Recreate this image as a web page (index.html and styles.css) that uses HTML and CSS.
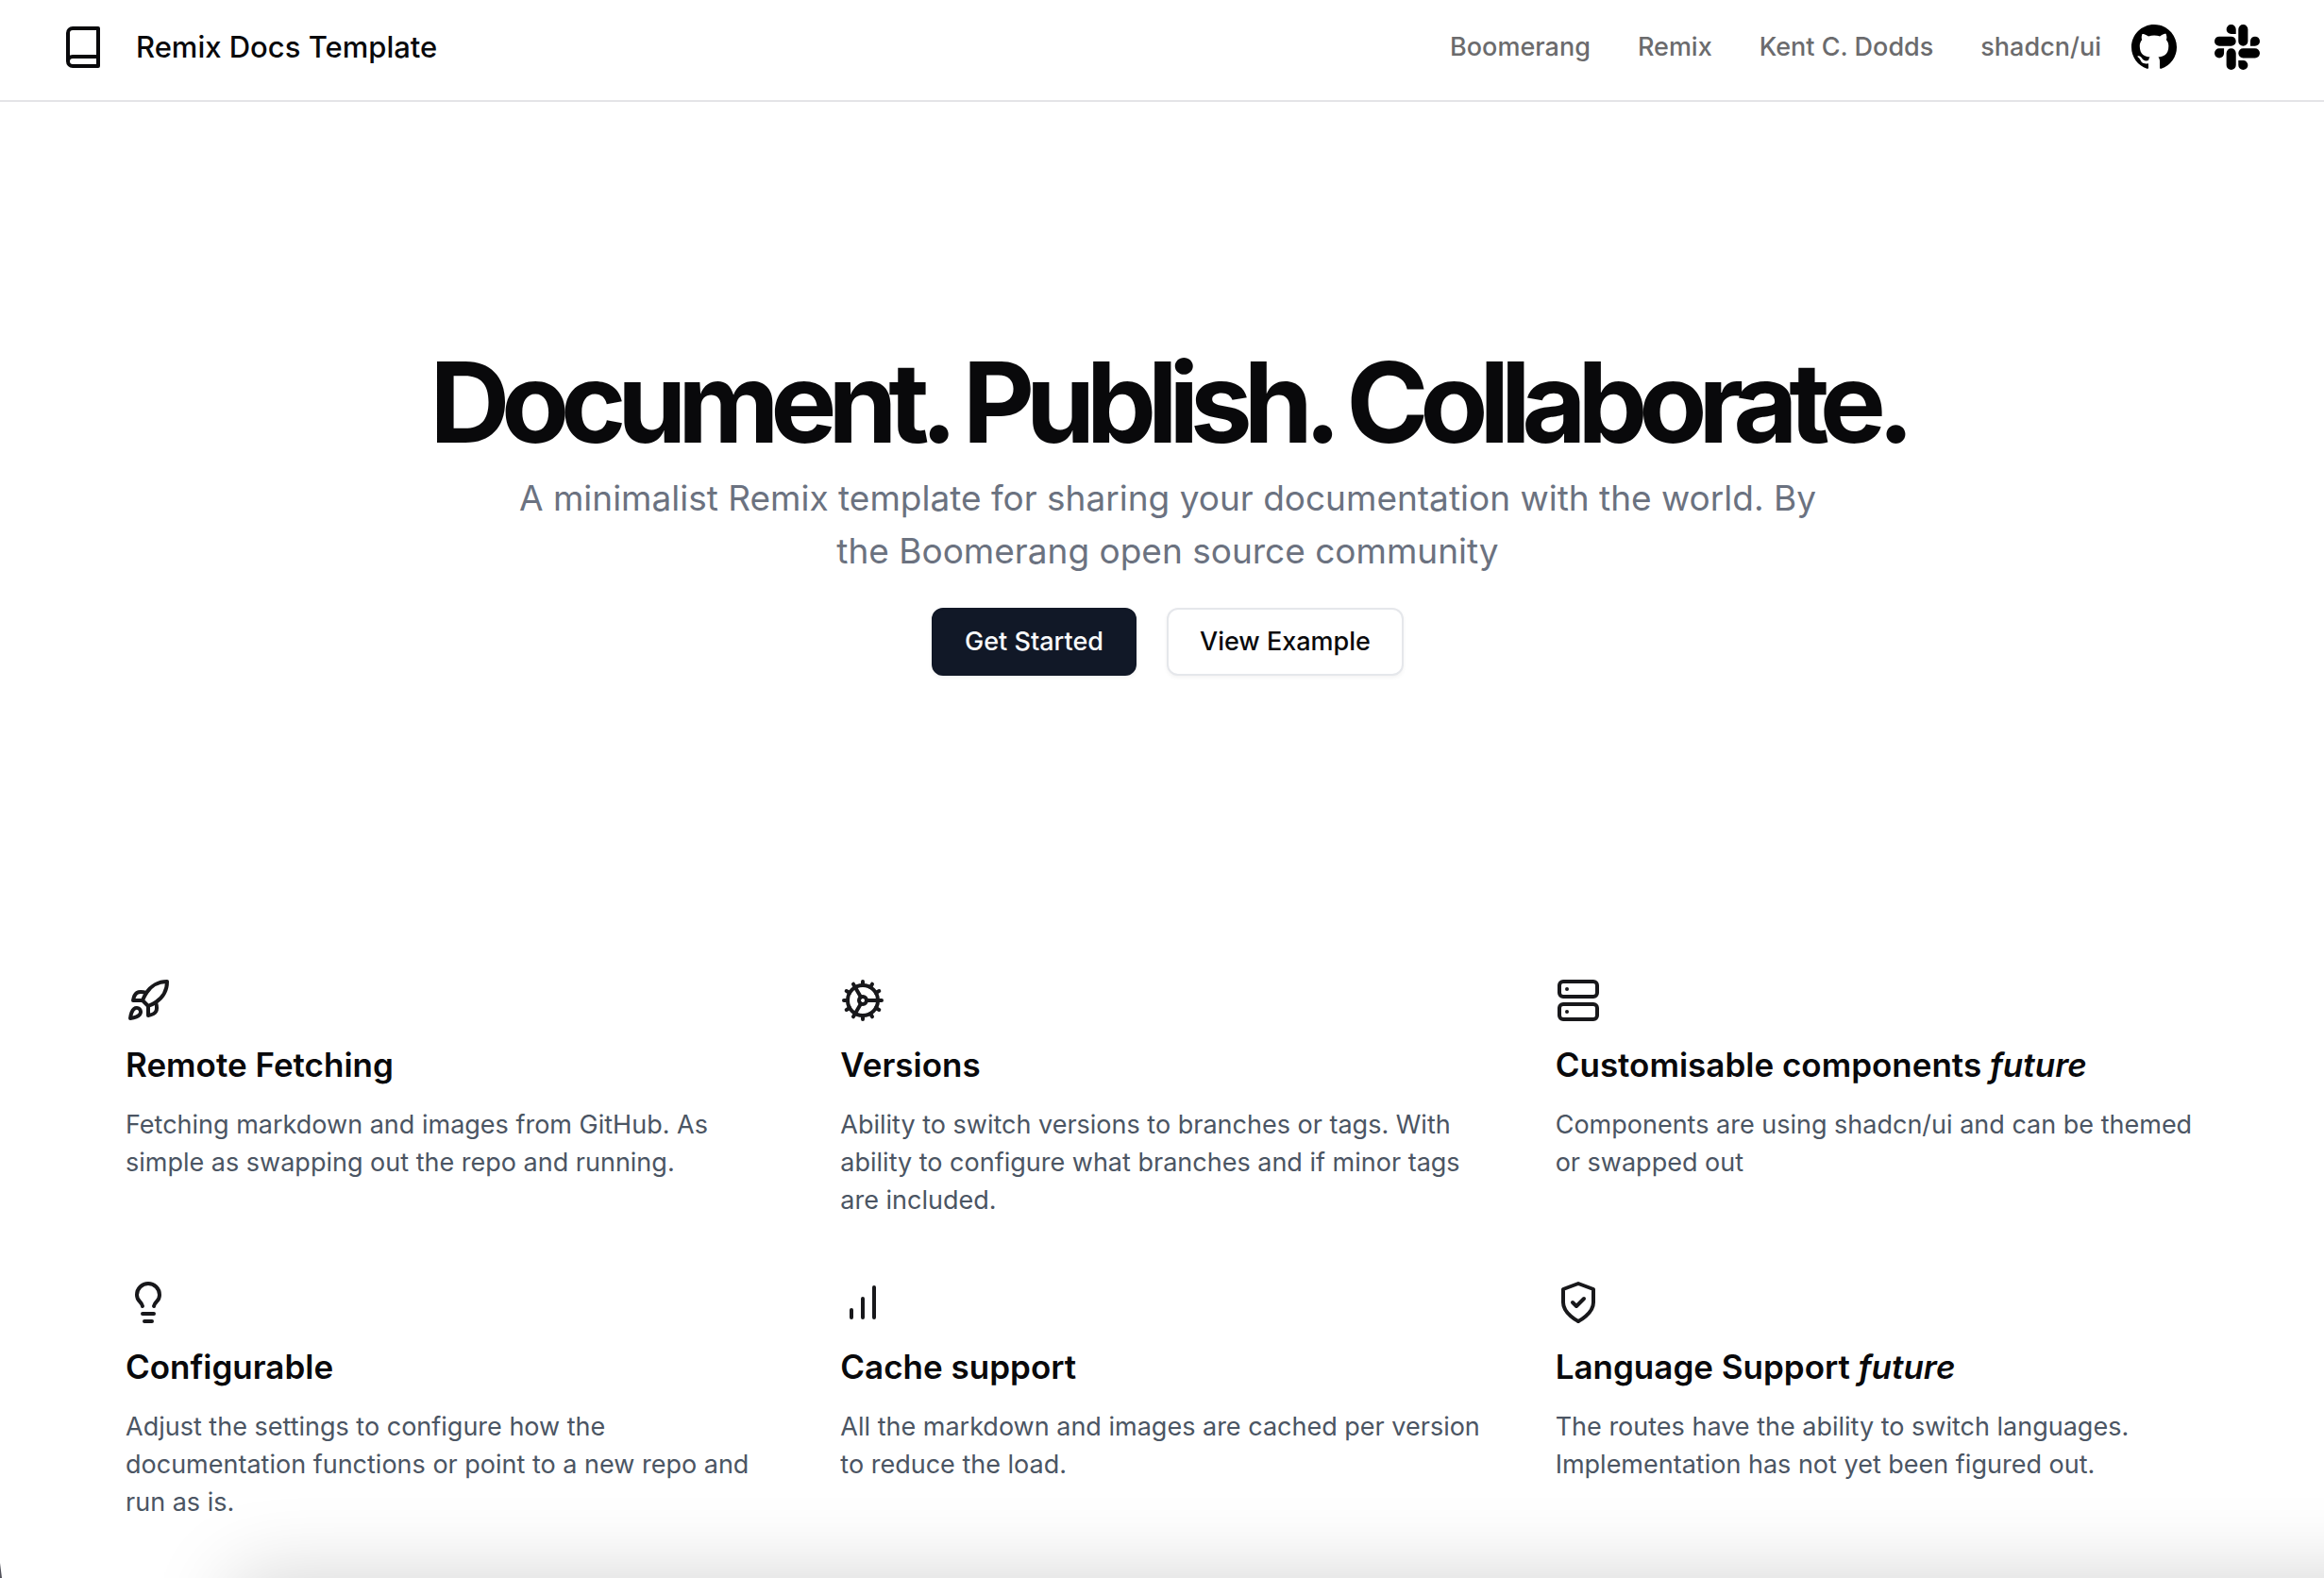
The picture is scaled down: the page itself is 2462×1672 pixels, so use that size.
FILE: index.html
```html
<!DOCTYPE html>
<html lang="en">
<head>
<meta charset="utf-8">
<meta name="viewport" content="width=device-width, initial-scale=1">
<title>Remix Docs Template</title>
<link rel="stylesheet" href="styles.css">
</head>
<body>
<header class="site-header">
  <a class="brand" href="#">
    <svg class="icon" viewBox="0 0 24 24" aria-hidden="true"><path d="M4 19.500v-15A2.500 2.500 0 0 1 6.500 2H20v20H6.500a2.500 2.500 0 0 1 0-5H20"/></svg>
    <span>Remix Docs Template</span>
  </a>
  <nav class="site-nav">
    <a href="#">Boomerang</a>
    <a href="#">Remix</a>
    <a href="#">Kent C. Dodds</a>
    <a href="#">shadcn/ui</a>
  </nav>
  <div class="social">
    <a href="#" aria-label="GitHub"><svg class="logo" viewBox="0 0 16 16"><path d="M8 0C3.580 0 0 3.580 0 8c0 3.540 2.290 6.530 5.470 7.590.4.070.55-.17.55-.38 0-.19-.01-.82-.01-1.490-2.010.37-2.530-.49-2.690-.94-.09-.23-.48-.94-.82-1.130-.28-.15-.68-.52-.01-.53.63-.01 1.080.58 1.230.82.72 1.210 1.870.87 2.330.66.07-.52.28-.87.51-1.070-1.780-.2-3.640-.89-3.640-3.950 0-.87.31-1.590.82-2.150-.08-.2-.36-1.020.08-2.120 0 0 .67-.21 2.200.82.64-.18 1.320-.27 2-.27s1.360.09 2 .27c1.530-1.040 2.200-.82 2.200-.82.44 1.100.16 1.920.08 2.120.51.56.82 1.270.82 2.150 0 3.070-1.870 3.750-3.650 3.950.29.25.54.73.54 1.480 0 1.070-.01 1.930-.01 2.200 0 .21.15.46.55.38A8.010 8.010 0 0 0 16 8c0-4.420-3.580-8-8-8z"/></svg></a>
    <a href="#" aria-label="Slack"><svg class="logo" viewBox="0 0 24 24"><path d="M5.042 15.165a2.528 2.528 0 0 1-2.520 2.523A2.528 2.528 0 0 1 0 15.165a2.527 2.527 0 0 1 2.522-2.520h2.520v2.520zM6.313 15.165a2.527 2.527 0 0 1 2.521-2.520 2.527 2.527 0 0 1 2.521 2.520v6.313A2.528 2.528 0 0 1 8.834 24a2.528 2.528 0 0 1-2.521-2.522v-6.313zM8.834 5.042a2.528 2.528 0 0 1-2.521-2.520A2.528 2.528 0 0 1 8.834 0a2.528 2.528 0 0 1 2.521 2.522v2.520H8.834zM8.834 6.313a2.528 2.528 0 0 1 2.521 2.521 2.528 2.528 0 0 1-2.521 2.521H2.522A2.528 2.528 0 0 1 0 8.834a2.528 2.528 0 0 1 2.522-2.521h6.312zM18.956 8.834a2.528 2.528 0 0 1 2.522-2.521A2.528 2.528 0 0 1 24 8.834a2.528 2.528 0 0 1-2.522 2.521h-2.522V8.834zM17.688 8.834a2.528 2.528 0 0 1-2.523 2.521 2.527 2.527 0 0 1-2.520-2.521V2.522A2.527 2.527 0 0 1 15.165 0a2.528 2.528 0 0 1 2.523 2.522v6.312zM15.165 18.956a2.528 2.528 0 0 1 2.523 2.522A2.528 2.528 0 0 1 15.165 24a2.527 2.527 0 0 1-2.520-2.522v-2.522h2.520zM15.165 17.688a2.527 2.527 0 0 1-2.520-2.523 2.526 2.526 0 0 1 2.520-2.520h6.313A2.527 2.527 0 0 1 24 15.165a2.528 2.528 0 0 1-2.522 2.523h-6.313z"/></svg></a>
  </div>
</header>
<main>
  <section class="hero">
    <h1>Document. Publish. Collaborate.</h1>
    <p>A minimalist Remix template for sharing your documentation with the world. By<br>the Boomerang open source community</p>
    <div class="actions">
      <button class="button button-primary" type="button">Get Started</button>
      <button class="button" type="button">View Example</button>
    </div>
  </section>
  <section class="features">
    <article class="feature">
      <svg class="icon" viewBox="0 0 24 24" aria-hidden="true"><path d="M4.500 16.500c-1.500 1.260-2 5-2 5s3.740-.5 5-2c.71-.84.7-2.130-.09-2.910a2.180 2.180 0 0 0-2.910-.09z"/><path d="m12 15-3-3a22 22 0 0 1 2-3.950A12.880 12.880 0 0 1 22 2c0 2.720-.78 7.500-6 11a22.350 22.350 0 0 1-4 2z"/><path d="M9 12H4s.55-3.030 2-4c1.620-1.080 5 0 5 0"/><path d="M12 15v5s3.030-.55 4-2c1.080-1.620 0-5 0-5"/></svg>
      <h2>Remote Fetching</h2>
      <p>Fetching markdown and images from GitHub. As simple as swapping out the repo and running.</p>
    </article>
    <article class="feature">
      <svg class="icon" viewBox="0 0 24 24" aria-hidden="true"><path d="M12 20a8 8 0 1 0 0-16 8 8 0 0 0 0 16Z"/><path d="M12 14a2 2 0 1 0 0-4 2 2 0 0 0 0 4Z"/><path d="M12 2v2M12 22v-2M17 20.660l-1-1.730M11 10.270 7 3.340M20.660 17l-1.730-1M3.340 7l1.730 1M14 12h8M2 12h2M20.660 7l-1.730 1M3.340 17l1.730-1M17 3.340l-1 1.730M11 13.730l-4 6.930"/></svg>
      <h2>Versions</h2>
      <p>Ability to switch versions to branches or tags. With ability to configure what branches and if minor tags are included.</p>
    </article>
    <article class="feature">
      <svg class="icon" viewBox="0 0 24 24" aria-hidden="true"><rect x="2" y="2" width="20" height="8" rx="2"/><rect x="2" y="14" width="20" height="8" rx="2"/><path d="M6 6h.01M6 18h.01"/></svg>
      <h2>Customisable components <em>future</em></h2>
      <p>Components are using shadcn/ui and can be themed or swapped out</p>
    </article>
    <article class="feature">
      <svg class="icon" viewBox="0 0 24 24" aria-hidden="true"><path d="M15 14c.2-1 .7-1.700 1.500-2.500 1-.9 1.500-2.200 1.500-3.500A6 6 0 0 0 6 8c0 1 .2 2.200 1.500 3.500.7.7 1.300 1.500 1.500 2.500M9 18h6M10 22h4"/></svg>
      <h2>Configurable</h2>
      <p>Adjust the settings to configure how the documentation functions or point to a new repo and run as is.</p>
    </article>
    <article class="feature">
      <svg class="icon" viewBox="0 0 24 24" aria-hidden="true"><path d="M6 20v-4M12 20V10M18 20V4"/></svg>
      <h2>Cache support</h2>
      <p>All the markdown and images are cached per version to reduce the load.</p>
    </article>
    <article class="feature">
      <svg class="icon" viewBox="0 0 24 24" aria-hidden="true"><path d="M12 22s8-4 8-10V5l-8-3-8 3v7c0 6 8 10 8 10"/><path d="m9 12 2 2 4-4"/></svg>
      <h2>Language Support <em>future</em></h2>
      <p>The routes have the ability to switch languages. Implementation has not yet been figured out.</p>
    </article>
  </section>
</main>
<div class="bottom-shade" aria-hidden="true"></div>
<div class="corner" aria-hidden="true"></div>
</body>
</html>
```
FILE: styles.css
```css
* { box-sizing: border-box; }

body {
  margin: 0;
  min-height: 100vh;
  overflow-x: hidden;
  background: #fff;
  color: #09090b;
  font-family: Inter, "Liberation Sans", sans-serif;
  font-size: 27px;
  line-height: 40px;
}

h1, h2, p { margin: 0; }
a { color: inherit; text-decoration: none; }

.icon {
  display: block;
  flex: none;
  width: 48px;
  height: 48px;
  fill: none;
  stroke: currentColor;
  stroke-width: 2;
  stroke-linecap: round;
  stroke-linejoin: round;
}

.site-header {
  display: flex;
  align-items: center;
  height: 108px;
  padding: 0 68px 6px 64px;
  border-bottom: 2px solid #e4e4e7;
}

.brand {
  display: flex;
  align-items: center;
  gap: 32px;
  margin-right: auto;
  font-size: 31px;
  font-weight: 500;
}

.site-nav {
  display: flex;
  gap: 50px;
  color: #6b6b6d;
  font-weight: 500;
}

.social {
  display: flex;
  gap: 40px;
  margin-left: 32px;
}

.logo {
  display: block;
  width: 48px;
  height: 48px;
  fill: #000;
}

.hero {
  display: flex;
  flex-direction: column;
  align-items: center;
  padding: 258px 0 320px 12px;
  text-align: center;
}

.hero h1 {
  font-size: 118px;
  font-weight: 700;
  line-height: 120px;
  letter-spacing: -0.08em;
}

.hero p {
  margin-top: 14px;
  color: #6b7280;
  font-size: 37px;
  line-height: 56px;
}

.actions {
  display: flex;
  gap: 32px;
  margin-top: 32px;
}

.button {
  height: 72px;
  padding: 0 33px;
  border: 2px solid #e5e7eb;
  border-radius: 12px;
  background: #fff;
  box-shadow: 0 2px 4px rgba(0, 0, 0, 0.05);
  color: #09090b;
  font: inherit;
  font-weight: 500;
}

.button-primary {
  border-color: #111827;
  background: #111827;
  color: #f9fafb;
}

.features {
  display: grid;
  grid-template-columns: repeat(3, 1fr);
  gap: 64px;
  padding: 0 121px 64px 133px;
}

.feature .icon { color: #18181b; }

.feature h2 {
  margin: 16px 0;
  font-size: 35px;
  font-weight: 600;
  line-height: 56px;
}

.feature p { color: #4b5563; }

.bottom-shade {
  position: fixed;
  top: 100%;
  right: -200px;
  left: 248px;
  height: 200px;
  box-shadow: 0 0 88px rgba(0, 0, 0, 0.18);
}

.corner {
  position: fixed;
  bottom: 0;
  left: 0;
  width: 2px;
  height: 16px;
  background: #52525b;
  clip-path: polygon(0 0, 100% 100%, 0 100%);
}
```
